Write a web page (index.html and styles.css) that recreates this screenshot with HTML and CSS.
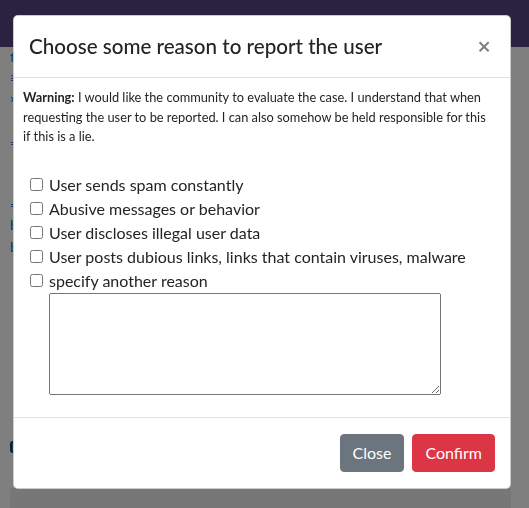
FILE: index.html
```html
<!DOCTYPE html>
<html lang="en">
<head>
<meta charset="utf-8">
<title>Report user</title>
<link rel="stylesheet" href="styles.css">
</head>
<body>
<div class="page">
  <nav class="navbar">
    <span class="nav-toggle">&#8801;</span>
    <span class="brand">Blog</span>
  </nav>
  <div class="side">
    <a class="side-link l1">tags</a>
    <a class="side-link l2">&#8801; menu</a>
    <a class="side-link l3">&#8250; next</a>
    <a class="side-link l4">= list</a>
    <a class="side-link l5">= list</a>
    <a class="side-link l6">blog</a>
    <a class="side-link l7">blog</a>
    <span class="side-icon"></span>
  </div>
  <div class="page-footer"></div>
</div>

<div class="backdrop"></div>

<div class="modal">
  <div class="modal-dialog">
    <div class="modal-content">
      <div class="modal-header">
        <h5 class="modal-title">Choose some reason to report the user</h5>
        <button class="close" type="button" aria-label="Close">&times;</button>
      </div>
      <div class="modal-body">
        <p class="warning"><strong>Warning:</strong> I would like the community to evaluate the case. I understand that when requesting the user to be reported. I can also somehow be held responsible for this if this is a lie.</p>
        <div class="reasons">
          <label class="reason"><input type="checkbox"><span>User sends spam constantly</span></label>
          <label class="reason"><input type="checkbox"><span>Abusive messages or behavior</span></label>
          <label class="reason"><input type="checkbox"><span>User discloses illegal user data</span></label>
          <label class="reason"><input type="checkbox"><span>User posts dubious links, links that contain viruses, malware</span></label>
          <label class="reason"><input type="checkbox"><span>specify another reason</span></label>
          <textarea class="other"></textarea>
        </div>
      </div>
      <div class="modal-footer">
        <button class="btn btn-secondary" type="button">Close</button>
        <button class="btn btn-danger" type="button">Confirm</button>
      </div>
    </div>
  </div>
</div>
</body>
</html>
```
FILE: styles.css
```css
* { box-sizing: border-box; }

body {
  margin: 0;
  font-family: "Lato", "Open Sans", sans-serif;
  color: #212529;
  background: #fff;
  overflow: hidden;
}

/* underlying page */
.page {
  height: 508px;
  display: flex;
  flex-direction: column;
}

.navbar {
  height: 47px;
  background: #564280;
  display: flex;
  align-items: center;
  gap: 20px;
  padding: 0 8px 0 20px;
  color: #fff;
}

.nav-toggle { font-size: 22px; color: rgba(255,255,255,.6); }
.brand { font-size: 20px; margin-top: -6px; }

.side {
  flex: 1;
  display: flex;
  flex-direction: column;
  padding-left: 10px;
}

.side-link {
  color: #0a6ee0;
  font-size: 14px;
  line-height: 20px;
}
.l1 { margin-top: 0; }
.l2 { margin-top: 1px; }
.l3 { margin-top: 0; }
.l4 { margin-top: 25px; }
.l5 { margin-top: 42px; }
.l6 { margin-top: 0; }
.l7 { margin-top: 2px; }

.side-icon {
  margin-top: 184px;
  width: 8px;
  height: 12px;
  border: 2px solid #1d3d66;
  border-radius: 3px;
  background: #3b7bc8;
}

.page-footer {
  height: 20px;
  margin-left: 10px;
  width: 501px;
  background: #eeeeee;
}

.backdrop {
  position: fixed;
  inset: 0;
  background: rgba(0,0,0,.5);
}

/* modal */
.modal {
  position: fixed;
  inset: 0;
}

.modal-dialog {
  width: 498px;
  margin: 15px 0 0 13px;
}

.modal-content {
  background: #fff;
  border: 1px solid rgba(0,0,0,.2);
  border-radius: 5px;
  display: flex;
  flex-direction: column;
}

.modal-header {
  display: flex;
  align-items: flex-start;
  padding: 15px 16px 15px 15px;
  border-bottom: 1px solid #dee2e6;
}

.modal-title {
  margin: 0;
  font-size: 20.6px;
  font-weight: 500;
  line-height: 31px;
}

.close {
  margin-left: auto;
  padding: 0 3px;
  border: 0;
  background: transparent;
  font-family: "Open Sans", sans-serif;
  font-size: 24px;
  font-weight: 600;
  line-height: 30px;
  color: #000;
  opacity: .5;
}

.modal-body {
  padding: 10px 16px 16px 9px;
}

.warning {
  margin: 0;
  width: 466px;
  font-size: 12.8px;
  line-height: 19.5px;
}

.warning strong { font-weight: 700; }

.reasons {
  margin-top: 26px;
  display: flex;
  flex-direction: column;
  align-items: flex-start;
  padding-left: 7px;
}

.reason {
  display: flex;
  align-items: center;
  gap: 6px;
  font-size: 16px;
  line-height: 24px;
}

.reason input {
  margin: 0;
  width: 13px;
  height: 13px;
}

.other {
  margin: 0 0 6px 19px;
  width: 392px;
  height: 102px;
  resize: vertical;
}

.modal-footer {
  display: flex;
  justify-content: flex-end;
  align-items: center;
  padding: 12px;
  border-top: 1px solid #dee2e6;
}

.btn {
  margin: 4px;
  padding: 6px 12px;
  font-family: inherit;
  font-size: 16px;
  line-height: 24px;
  border: 1px solid transparent;
  border-radius: 4px;
  color: #fff;
}

.btn-danger { margin-right: 3px; }

.btn-secondary { background: #6c757d; border-color: #6c757d; }
.btn-danger { background: #dc3545; border-color: #dc3545; }
```
